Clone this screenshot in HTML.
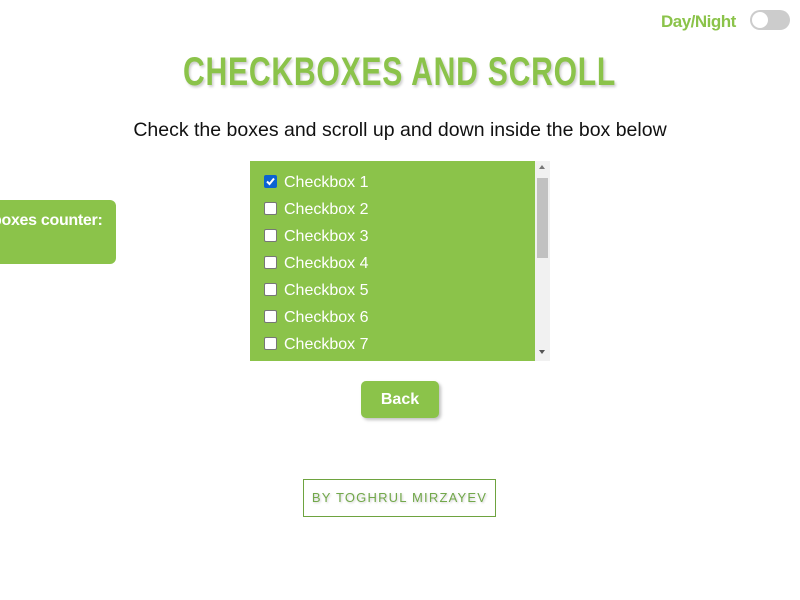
<!DOCTYPE html>
<html><head><style>
body{margin:0;width:800px;height:600px;position:relative;overflow:hidden;background:#fff;font-family:"Liberation Sans",sans-serif}
.a{position:absolute}
#title{left:0;width:800px;top:50px;text-align:center;color:#8bc34a;font-weight:bold;font-size:40px;letter-spacing:1px;text-shadow:2px 2px 3px rgba(0,0,0,.2)}
#title span{display:inline-block;transform:scaleX(0.753)}
#sub{left:0;width:800px;top:119px;text-align:center;font-size:19.5px;color:#111}
#list{left:250px;top:161px;width:285px;height:200px;background:#8bc34a;overflow:hidden}
.row{position:absolute;left:14px;color:#fff;font-size:16px;height:20px;line-height:20px}
.cb{display:inline-block;width:11px;height:11px;background:#fff;border:1px solid #777;border-radius:2px;vertical-align:-1px;margin-right:7px}
.cb.on{background:#0b63d1;border-color:#0b63d1;position:relative}
#sb{left:535px;top:161px;width:15px;height:200px;background:#f1f1f1}
#thumb{left:537px;top:178px;width:11px;height:80px;background:#c1c1c1}
</style></head><body>
<div class="a" style="left:661px;top:12px;color:#8bc34a;font-weight:bold;font-size:17px;letter-spacing:-0.5px">Day/Night</div>
<div class="a" style="left:750px;top:10px;width:40px;height:20px;border-radius:10px;background:#ccc"></div>
<div class="a" style="left:752px;top:12px;width:16px;height:16px;border-radius:50%;background:#fff"></div>
<div id="title" class="a"><span>CHECKBOXES AND SCROLL</span></div>
<div id="sub" class="a">Check the boxes and scroll up and down inside the box below</div>
<div class="a" style="left:-20px;top:200px;width:136px;height:64px;background:#8bc34a;border-radius:6px"></div>
<div class="a" style="left:-8px;top:212px;color:#fff;font-weight:bold;font-size:16px;letter-spacing:-0.3px">boxes counter:</div>
<div id="list" class="a">
<div class="row" style="top:12px"><span class="cb on"><svg width="11" height="11" style="position:absolute;left:0;top:0"><path d="M2 5.5L4.5 8L9 2.5" stroke="#fff" stroke-width="2" fill="none"/></svg></span>Checkbox 1</div>
<div class="row" style="top:39px"><span class="cb"></span>Checkbox 2</div>
<div class="row" style="top:66px"><span class="cb"></span>Checkbox 3</div>
<div class="row" style="top:93px"><span class="cb"></span>Checkbox 4</div>
<div class="row" style="top:120px"><span class="cb"></span>Checkbox 5</div>
<div class="row" style="top:147px"><span class="cb"></span>Checkbox 6</div>
<div class="row" style="top:174px"><span class="cb"></span>Checkbox 7</div>
</div>
<div id="sb" class="a"></div>
<div id="thumb" class="a"></div>
<div class="a" style="left:539px;top:165px;width:0;height:0;border-left:3px solid transparent;border-right:3px solid transparent;border-bottom:4px solid #777"></div>
<div class="a" style="left:539px;top:350px;width:0;height:0;border-left:3px solid transparent;border-right:3px solid transparent;border-top:4px solid #555"></div>
<div class="a" style="left:361px;top:381px;width:78px;height:37px;background:#8bc34a;border-radius:5px;box-shadow:2px 2px 3px rgba(0,0,0,.25);color:#fff;font-weight:bold;font-size:16px;line-height:37px;text-align:center">Back</div>
<div class="a" style="left:303px;top:479px;width:191px;height:36px;border:1px solid #6ea33f;color:#72a84a;font-size:13px;letter-spacing:1.2px;line-height:36px;text-align:center;text-shadow:1px 1px 2px rgba(0,0,0,.2)">BY TOGHRUL MIRZAYEV</div>
</body></html>
